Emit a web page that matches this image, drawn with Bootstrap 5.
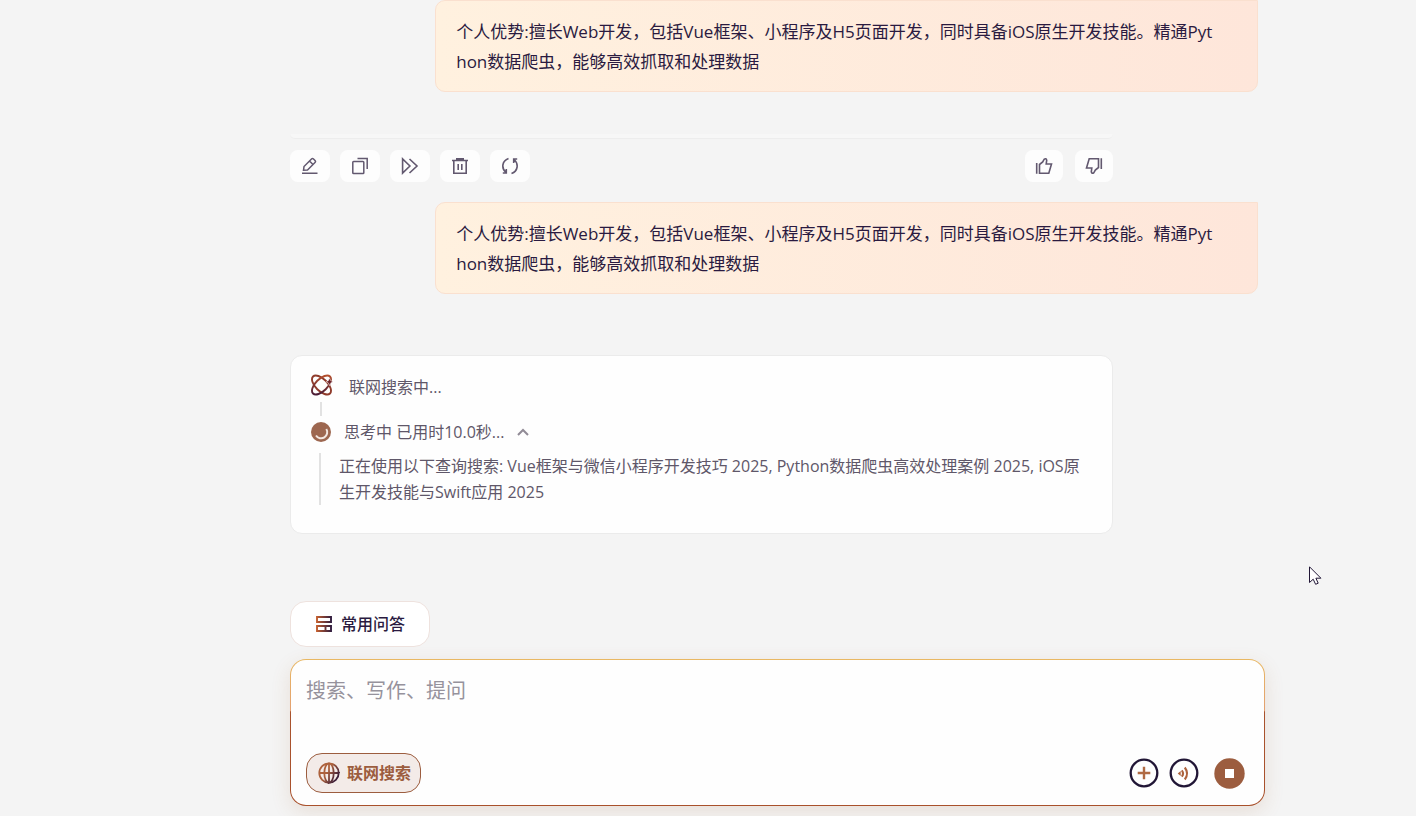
<!DOCTYPE html>
<html lang="zh-CN">
<head>
<meta charset="utf-8">
<meta name="viewport" content="width=device-width, initial-scale=1">
<title>联网搜索</title>
<link href="https://cdn.jsdelivr.net/npm/bootstrap@5.3.0/dist/css/bootstrap.min.css" rel="stylesheet">
<script src="https://cdn.jsdelivr.net/npm/bootstrap@5.3.0/dist/js/bootstrap.bundle.min.js" defer></script>
<style>
:root{--ink:#2a1a40;--muted:#5f5769;--brand:#9c5d3f}
body{font-family:"Open Sans","Noto Sans CJK SC",sans-serif;background:#f4f4f4;color:var(--ink)}
.chat-page{padding:0 151px 10px 290px}
.thread{padding-right:7px}
.turn{width:85%}
.user-bubble{padding:16px 20px 14px 20px;border:1px solid #fae0cf;border-radius:10px 0 10px 10px;background:linear-gradient(90deg,#fff1df,#fee6da);font-size:17px;line-height:30px;word-break:break-all}
.tail{margin-top:42px;height:5px;background:#f7f7f7;border-bottom:1px solid #ededed;border-radius:0 0 10px 10px}
.tools{margin-top:11px;margin-bottom:20px}
.tool-group{gap:10px}
.vote-group{gap:12px}
.tool{height:32px;width:40px;border:0;border-radius:8px;background:#fdfdfd;color:#62586f}
.tool.vote{width:38px}
.tool svg,.process svg,.composer svg,.faq svg{display:block;fill:none;stroke:currentColor}
.process{margin-top:61px;min-height:179px;padding:18px 20px;border:1px solid #ebebeb;border-radius:12px;background:#fefefe;color:var(--muted);line-height:26px}
.search-step{gap:16px}
.think-step{gap:13px}
.joint{width:2px;height:14px;margin:2px 0 3px 9px;background:#e2e2e2}
.detail{margin:8px 0 0 8px;padding-left:18px;border-left:2px solid #e2e2e2}
.faq{margin-top:67px;height:46px;padding:0 24px 0 25px;gap:9px;border:1px solid #eee2de;border-radius:16px;background:#fff;font-weight:500;color:var(--ink)}
.composer{margin-top:12px;height:147px;padding:16px 19px 12px 15px;border:1px solid transparent;border-radius:16px;background:linear-gradient(#fefefe,#fefefe) padding-box,linear-gradient(180deg,#e9b862 0,#e3a070 35%,#a9532d 36%,#a9512c 100%) border-box;box-shadow:0 6px 20px #a0603024}
.prompt-box{border:0;background:transparent;resize:none;outline:0;height:60px;font-size:20px;line-height:30px;color:var(--ink)}
.prompt-box::placeholder{color:#96929c;opacity:1}
.web-toggle{height:40px;padding:0 9px 0 11px;gap:7px;border:1px solid var(--brand);border-radius:16px;background:#f3ebe8;color:var(--brand);font-weight:700}
.round-group{gap:10px}
.round-btn{border:0;background:transparent}
.stop-btn{margin-left:5px}
</style>
</head>
<body>
<main class="chat-page">
 <section class="thread">
  <div class="turn user-bubble ms-auto">个人优势:擅长Web开发，包括Vue框架、小程序及H5页面开发，同时具备iOS原生开发技能。精通Pyt<br>hon数据爬虫，能够高效抓取和处理数据</div>
  <div class="turn tail"></div>
  <div class="turn tools d-flex justify-content-between">
   <div class="tool-group d-flex">
    <button class="tool d-flex align-items-center justify-content-center p-0" aria-label="编辑"><svg width="18" height="18" viewBox="0 0 18 18" stroke-width="1.5"><path d="M1 16.300h15.500M2.500 13.300l.5-3.800 7.500-7.500q1-1 2 0l1.500 1.500q1 1 0 2l-7.500 7.500zM8.500 4l3.500 3.500"/></svg></button>
    <button class="tool d-flex align-items-center justify-content-center p-0" aria-label="复制"><svg width="18" height="18" viewBox="0 0 18 18" stroke-width="1.5"><rect x="1.800" y="4.500" width="11" height="12" rx=".8"/><path d="M6.500 1.500h9.700V12"/></svg></button>
    <button class="tool d-flex align-items-center justify-content-center p-0" aria-label="继续"><svg width="18" height="18" viewBox="0 0 18 18" stroke-width="1.600"><path d="M1.600 2v14l7.300-7zM8.500 2l7.500 7-7.500 7"/></svg></button>
    <button class="tool d-flex align-items-center justify-content-center p-0" aria-label="删除"><svg width="18" height="18" viewBox="0 0 18 18" stroke-width="1.600"><path d="M1 3.500h16M5 1.900h8M2.800 3.500v12.800h12.400V3.500M7.200 7v6M10.800 7v6"/></svg></button>
    <button class="tool d-flex align-items-center justify-content-center p-0" aria-label="重新生成"><svg width="18" height="18" viewBox="0 0 18 18" stroke-width="1.600"><path d="M7.500 1.500C1 4 0 11 5 15.500M5.300 12v4H1.800M10.500 16.500C17 14 18 7 13 2.500M12.700 6V2h3.500"/></svg></button>
   </div>
   <div class="vote-group d-flex">
    <button class="tool vote d-flex align-items-center justify-content-center p-0" aria-label="赞"><svg width="18" height="18" viewBox="0 0 18 18" stroke-width="1.600"><path d="M1.700 6v10.700M4.500 7.500v8.800h9.300L16.500 7h-5.300L11.700 3.200Q11.200 1 9.200 2.200L7.700 5z"/></svg></button>
    <button class="tool vote d-flex align-items-center justify-content-center p-0" aria-label="踩"><svg width="18" height="18" viewBox="0 0 18 18" stroke-width="1.600"><path d="M16.300 12V1.300M13.500 10.500V1.700H4.200L1.500 11h5.300L6.300 14.800Q6.800 17 8.800 15.800L10.300 13z"/></svg></button>
   </div>
  </div>
  <div class="turn user-bubble ms-auto">个人优势:擅长Web开发，包括Vue框架、小程序及H5页面开发，同时具备iOS原生开发技能。精通Pyt<br>hon数据爬虫，能够高效抓取和处理数据</div>
  <article class="turn process">
   <div class="search-step d-flex align-items-start">
    <svg width="22" height="22" viewBox="0 0 22 22" stroke-width="1.900"><defs><linearGradient id="orbit-a" x1="-2" y1="0" x2="24" y2="0" gradientTransform="rotate(45 10.500 11)" gradientUnits="userSpaceOnUse"><stop stop-color="#c9592b"/><stop offset="1" stop-color="#3b1639"/></linearGradient><linearGradient id="orbit-b" x1="24" y1="0" x2="-2" y2="0" gradientTransform="rotate(-45 10.500 11)" gradientUnits="userSpaceOnUse"><stop stop-color="#c9592b"/><stop offset="1" stop-color="#3b1639"/></linearGradient></defs><ellipse cx="10.500" cy="11" rx="12" ry="6" transform="rotate(45 10.500 11)" stroke="#8f3b2b"/><ellipse cx="10.500" cy="11" rx="12" ry="6" transform="rotate(-45 10.500 11)" stroke="url(#orbit-b)"/><path d="M18.500 4l1.200 2.700L22 7.800l-2.300 1.100-1.200 2.700-1.200-2.700L15 7.800l2.300-1.100z" fill="#6b2229" stroke="#fefefe" stroke-width=".5"/></svg>
    <span>联网搜索中...</span>
   </div>
   <div class="joint"></div>
   <div class="think-step d-flex align-items-center">
    <svg width="20" height="20" viewBox="0 0 20 20"><circle cx="10" cy="10" r="10" fill="#9d6750" stroke="none"/><path d="M15.300 7A6 6 0 0 1 5 13.500" stroke="#f3e7e1" stroke-width="2"/></svg>
    <span>思考中 已用时10.0秒...</span>
    <svg width="12" height="8" viewBox="0 0 12 8" stroke-width="2" color="#918b96"><path d="M1 7l5-5 5 5"/></svg>
   </div>
   <div class="detail">正在使用以下查询搜索: Vue框架与微信小程序开发技巧 2025, Python数据爬虫高效处理案例 2025, iOS原生开发技能与Swift应用 2025</div>
  </article>
 </section>
 <button class="faq d-flex align-items-center"><svg width="16" height="16" viewBox="0 0 16 16"><defs><linearGradient id="tiles" x1="0" y1="0" x2="16" y2="0" gradientUnits="userSpaceOnUse"><stop stop-color="#c9612e"/><stop offset="1" stop-color="#2a1a40"/></linearGradient></defs><path d="M1 1h14v5H1zM1 10h14v5H1zM9.500 10v5" stroke="url(#tiles)" stroke-width="1.900"/></svg><span>常用问答</span></button>
 <form class="composer d-flex flex-column justify-content-between">
  <textarea class="prompt-box w-100 p-0" aria-label="提问" placeholder="搜索、写作、提问"></textarea>
  <div class="d-flex align-items-center justify-content-between">
   <button type="button" class="web-toggle d-flex align-items-center"><svg width="22" height="22" viewBox="0 0 22 22" stroke-width="1.800"><defs><linearGradient id="globe" x1="0" y1="0" x2="22" y2="14" gradientUnits="userSpaceOnUse"><stop offset=".5" stop-color="#ad623d"/><stop offset="1" stop-color="#2d1437"/></linearGradient></defs><g stroke="url(#globe)"><circle cx="11" cy="11" r="9.700"/><ellipse cx="11" cy="11" rx="4.700" ry="9.700"/><path d="M1 11h20v.01M11 1v20h.01"/></g></svg><span>联网搜索</span></button>
   <div class="round-group d-flex align-items-center">
    <button type="button" class="round-btn p-0" aria-label="添加"><svg width="30" height="30" viewBox="0 0 30 30"><circle cx="15" cy="15" r="13.300" stroke="#211636" stroke-width="2.300"/><path d="M15 8.700v12.600M8.700 15h12.600" stroke="#b06a43" stroke-width="2.400"/></svg></button>
    <button type="button" class="round-btn p-0" aria-label="语音"><svg width="30" height="30" viewBox="0 0 30 30"><circle cx="15" cy="15" r="13.300" stroke="#211636" stroke-width="2.300"/><path d="M8.700 15.500l3-2.500v5z" fill="#ad623d" stroke="none"/><path d="M12.800 12.300q2.500 3.200 0 6.400M15.800 9.500q4.500 6 0 12" stroke="#ad623d" stroke-width="2.100"/></svg></button>
    <button type="button" class="round-btn stop-btn p-0" aria-label="停止"><svg width="31" height="31" viewBox="0 0 31 31"><circle cx="15.500" cy="15.500" r="15.200" fill="#9c5d3f" stroke="none"/><path d="M11 11h9v9h-9z" fill="#fff" stroke="none"/></svg></button>
   </div>
  </div>
 </form>
</main>
<svg class="position-absolute" style="left:1309px;top:566px" width="13" height="20" viewBox="0 0 13 20" aria-hidden="true"><path d="M.5.800v15.700l3.700-3.300 2.400 5.100 2.600-1.100-2.300-5h5z" fill="#fff" stroke="#211636"/></svg>
</body>
</html>
